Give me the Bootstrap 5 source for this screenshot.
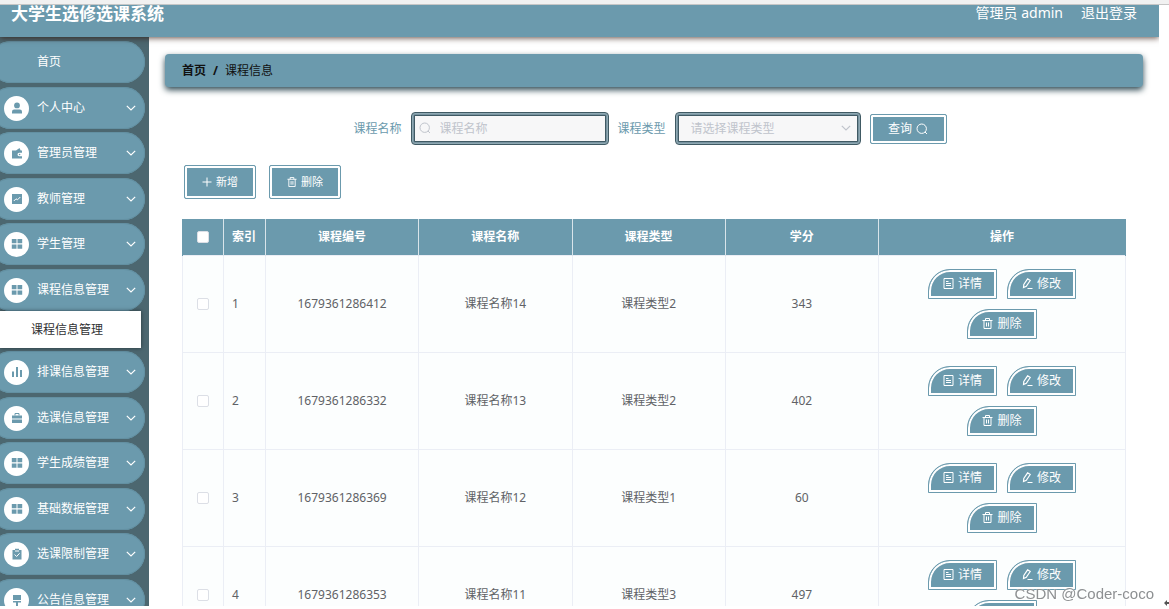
<!DOCTYPE html>
<html lang="zh-CN">
<head>
<meta charset="utf-8">
<meta name="viewport" content="width=device-width, initial-scale=1">
<title>大学生选修选课系统</title>
<link href="https://cdn.jsdelivr.net/npm/bootstrap@5.3.0/dist/css/bootstrap.min.css" rel="stylesheet">
<style>
  :root { --teal: #6b9aad; --deep: #4c6770; --line: #ebeef5; }
  body { font: 12px/18px "Noto Sans", "Noto Sans CJK SC", sans-serif; color: #606266; background: #fff; }
  a { text-decoration: none; color: inherit; }
  svg { display: block; flex: none; }
  .shell { padding-bottom: 3px; }
  .top-strip { height: 5px; background: #f1f1f1; border-bottom: 1px solid #c6c6c6; flex: none; }
  .frame { margin-right: 10px; min-height: 0; }
  .topbar { background: var(--teal); color: #fff; height: 32px; padding: 0 22px 0 11px; line-height: 16px; font-size: 14px; box-shadow: 0 1px 6px rgba(50, 20, 10, .75); clip-path: inset(0 0 -10px 0); z-index: 2; flex: none; }
  .topbar h1 { font-size: 17px; font-weight: 700; line-height: 18px; }
  .topbar .user { gap: 18px; }

  .side { width: 149px; background: var(--deep); padding-top: 4px; flex: none; overflow: hidden; }
  .side li { padding-bottom: 4px; }
  .side li:nth-child(even) { padding-bottom: 3px; }
  .side .entry { height: 42px; margin: 0 4px 0 -10px; padding: 0 9px 0 14px; border-radius: 21px; background: var(--teal); color: #fff; box-shadow: inset 0 0 0 1px #6390a2; }
  .disc { width: 25px; height: 25px; border-radius: 50%; background: #fff; color: var(--teal); margin-right: 8px; flex: none; }
  .disc.blank { background: none; }
  .sub { height: 37px; margin-right: 8px; padding-left: 31px; background: #fff; color: #303133; box-shadow: 0 0 4px rgba(0, 0, 0, .5); position: relative; }

  .page { padding: 17px 16px 0; min-width: 0; overflow: hidden; }
  .crumbs { height: 33px; padding: 0 17px; border-radius: 4px; background: var(--teal); color: #111; box-shadow: 0 3px 6px #2f4a54; gap: 7px; }
  .body-area { padding: 25px 17px 0; }
  .search { gap: 9px; color: var(--teal); padding-right: 8px; }
  .framed { height: 33px; border: 1px solid #405a64; border-radius: 4px; background: #f7f7f8; color: #606266; font-size: 12px; box-shadow: inset 0 0 0 1px #8fa9b3, inset 0 0 0 2px #7893a0, inset 0 0 0 3px #405a64; outline: 0; appearance: none; }
  .framed::placeholder { color: #c0c4cc; opacity: 1; }
  select.framed { width: 186px; padding: 0 30px 0 15px; color: #c0c4cc; }
  input.framed { width: 198px; padding: 0 8px 0 28px; }
  .lead-icon { position: absolute; left: 8px; top: 10px; color: #c0c4cc; }
  .tail-icon { position: absolute; right: 10px; top: 13px; color: #c0c4cc; }

  .tbtn { display: inline-flex; align-items: center; justify-content: center; gap: 4px; height: 30px; padding: 0 14px; border: 1px solid var(--teal); background: var(--teal); color: #fff; box-shadow: inset 0 0 0 2px #fff; font-size: 12px; line-height: 16px; border-radius: 2px; }
  .tbtn.leaf { border-radius: 22px 0 0 0; }
  .tbtn.tool { width: 72px; height: 34px; font-size: 11px; padding: 0; }
  .tbtn.query { width: 77px; padding: 0; }
  .tools { gap: 13px; margin: 20px 0; padding-left: 2px; }

  .grid { table-layout: fixed; width: 100%; border-collapse: collapse; text-align: center; }
  .grid th { height: 36px; padding: 0; background: var(--teal); color: #fff; font-weight: 700; border: 1px solid #d9e4ea; border-width: 0 1px; }
  .grid thead th:first-child { border-left-color: var(--teal); }
  .grid thead th:last-child { border-right-color: var(--teal); }
  .grid td { padding: 0; background: #fcfefe; border: 1px solid var(--line); }
  .grid .pick { width: 41px; }
  .grid .num { width: 42px; text-align: left; padding-left: 8px; }
  .grid .ops { width: 247px; }
  .acts { gap: 10px; padding: 13px 30px; }
  .tick { appearance: none; width: 12px; height: 12px; border: 1px solid #dcdfe6; border-radius: 2px; background: #fff; display: block; margin: 0 auto; }
  .tick:checked { background: var(--teal); }
  .watermark { position: fixed; right: 15px; bottom: 5px; z-index: 5; font: 15px/20px "Liberation Sans", sans-serif; color: #8d9092; text-shadow: 0 0 1px #fff, 1px 1px 0 #fff; }
  .corner { position: fixed; right: 0; bottom: 3px; color: #555; }
</style>
</head>
<body>
<svg width="0" height="0" class="position-absolute" aria-hidden="true">
  <defs>
    <symbol id="down" viewBox="0 0 10 6"><path d="M.8.8L5 5 9.200.8" fill="none" stroke="currentColor" stroke-width="1.200"/></symbol>
    <symbol id="user" viewBox="0 0 12 12"><circle cx="6" cy="3.4" r="2.9" fill="currentColor"/><path d="M1 11.5V9.6Q1 7.4 3.2 7.4h5.6Q11 7.4 11 9.6v1.9z" fill="currentColor"/></symbol>
    <symbol id="wallet" viewBox="0 0 12 12"><path d="M1 3.5h4L8.5 1l1.2 2.5H11v2.3H8.2a1.7 1.7 0 000 3.400H11V11.500H1z" fill="currentColor"/><circle cx="8.600" cy="7.500" r=".8" fill="currentColor"/></symbol>
    <symbol id="trend" viewBox="0 0 12 12"><path d="M1 1h10v10H1z" fill="currentColor"/><path d="M2.800 8l2.200-2.200 1.500 1L9.300 4" fill="none" stroke="#fff"/></symbol>
    <symbol id="tiles" viewBox="0 0 12 12"><path d="M.8 1h4.700v4.200H.8zM6.500 1h4.700v4.200H6.500zM.8 6.500h4.700v4.200H.8zM6.500 6.500h4.700v4.200H6.500z" fill="currentColor"/></symbol>
    <symbol id="bars" viewBox="0 0 12 12"><path d="M1 5.500h2V11H1zM5 1h2v10H5zM9 4h2v7H9z" fill="currentColor"/></symbol>
    <symbol id="case" viewBox="0 0 12 12"><path d="M1 3.500h10V6.500H1zM1 7.500h10V11H1z" fill="currentColor"/><path d="M4 3.500v-2h4v2" fill="none" stroke="currentColor"/></symbol>
    <symbol id="clip" viewBox="0 0 12 12"><path d="M1.500 2H4V.8h4V2h2.500v9.500h-9z" fill="currentColor"/><path d="M3.600 6.500l2 2 3-3.200M4 3h4" fill="none" stroke="#fff"/></symbol>
    <symbol id="brush" viewBox="0 0 12 12"><path d="M2 1h8v5H2zM2 7h8v1.500H7V12H5V8.500H2z" fill="currentColor"/></symbol>
    <symbol id="lens" viewBox="0 0 12 12"><circle cx="5.700" cy="5.700" r="4.700" fill="none" stroke="currentColor"/><path d="M9 9l2 2" stroke="currentColor"/></symbol>
    <symbol id="plus" viewBox="0 0 10 10"><path d="M5 .5v9M.5 5h9" stroke="currentColor"/></symbol>
    <symbol id="bin" viewBox="0 0 11 11"><path d="M.5 2.500h10M3.500 2.500v-2h4v2M2 2.500v8h7v-8M4.500 4.500v4M6.500 4.500v4" fill="none" stroke="currentColor"/></symbol>
    <symbol id="doc" viewBox="0 0 11 11"><path d="M1 .5h9v10H1zM3 3.500h2.500M3 5.500h5M3 7.500h5" fill="none" stroke="currentColor"/></symbol>
    <symbol id="pen" viewBox="0 0 11 11"><path d="M1.500 9.500l.3-3L5.600.8l2.600 1.700L4.300 8.300zM5.500 10.500h5" fill="none" stroke="currentColor" stroke-width="1.200"/></symbol>
  </defs>
</svg>

<div class="shell vh-100 d-flex flex-column overflow-hidden">
  <div class="top-strip"></div>
  <div class="frame flex-grow-1 d-flex flex-column">
    <header class="topbar d-flex justify-content-between align-items-start position-relative">
      <h1 class="m-0">大学生选修选课系统</h1>
      <div class="user d-flex"><span>管理员 admin</span><a href="#">退出登录</a></div>
    </header>
    <div class="d-flex flex-grow-1 overflow-hidden">
      <nav class="side" aria-label="主菜单">
        <ul class="list-unstyled m-0">
          <li><a href="#" class="entry d-flex align-items-center"><span class="disc blank"></span>首页</a></li>
          <li><a href="#" class="entry d-flex align-items-center"><span class="disc d-flex align-items-center justify-content-center"><svg width="12" height="12"><use href="#user"/></svg></span>个人中心<svg class="ms-auto" width="10" height="6"><use href="#down"/></svg></a></li>
          <li><a href="#" class="entry d-flex align-items-center"><span class="disc d-flex align-items-center justify-content-center"><svg width="12" height="12"><use href="#wallet"/></svg></span>管理员管理<svg class="ms-auto" width="10" height="6"><use href="#down"/></svg></a></li>
          <li><a href="#" class="entry d-flex align-items-center"><span class="disc d-flex align-items-center justify-content-center"><svg width="12" height="12"><use href="#trend"/></svg></span>教师管理<svg class="ms-auto" width="10" height="6"><use href="#down"/></svg></a></li>
          <li><a href="#" class="entry d-flex align-items-center"><span class="disc d-flex align-items-center justify-content-center"><svg width="12" height="12"><use href="#tiles"/></svg></span>学生管理<svg class="ms-auto" width="10" height="6"><use href="#down"/></svg></a></li>
          <li><a href="#" class="entry d-flex align-items-center"><span class="disc d-flex align-items-center justify-content-center"><svg width="12" height="12"><use href="#tiles"/></svg></span>课程信息管理<svg class="ms-auto" width="10" height="6"><use href="#down"/></svg></a>
            <a href="#" class="sub d-flex align-items-center">课程信息管理</a></li>
          <li><a href="#" class="entry d-flex align-items-center"><span class="disc d-flex align-items-center justify-content-center"><svg width="12" height="12"><use href="#bars"/></svg></span>排课信息管理<svg class="ms-auto" width="10" height="6"><use href="#down"/></svg></a></li>
          <li><a href="#" class="entry d-flex align-items-center"><span class="disc d-flex align-items-center justify-content-center"><svg width="12" height="12"><use href="#case"/></svg></span>选课信息管理<svg class="ms-auto" width="10" height="6"><use href="#down"/></svg></a></li>
          <li><a href="#" class="entry d-flex align-items-center"><span class="disc d-flex align-items-center justify-content-center"><svg width="12" height="12"><use href="#tiles"/></svg></span>学生成绩管理<svg class="ms-auto" width="10" height="6"><use href="#down"/></svg></a></li>
          <li><a href="#" class="entry d-flex align-items-center"><span class="disc d-flex align-items-center justify-content-center"><svg width="12" height="12"><use href="#tiles"/></svg></span>基础数据管理<svg class="ms-auto" width="10" height="6"><use href="#down"/></svg></a></li>
          <li><a href="#" class="entry d-flex align-items-center"><span class="disc d-flex align-items-center justify-content-center"><svg width="12" height="12"><use href="#clip"/></svg></span>选课限制管理<svg class="ms-auto" width="10" height="6"><use href="#down"/></svg></a></li>
          <li><a href="#" class="entry d-flex align-items-center"><span class="disc d-flex align-items-center justify-content-center"><svg width="12" height="12"><use href="#brush"/></svg></span>公告信息管理<svg class="ms-auto" width="10" height="6"><use href="#down"/></svg></a></li>
        </ul>
      </nav>

      <main class="page flex-grow-1">
        <nav class="crumbs d-flex align-items-center" aria-label="breadcrumb">
          <a href="#" class="fw-bold">首页</a><span class="fw-bold">/</span><span>课程信息</span>
        </nav>
        <div class="body-area">
          <form class="search d-flex justify-content-center align-items-center">
            <label for="courseName">课程名称</label>
            <div class="position-relative"><input id="courseName" class="framed d-block" type="text" placeholder="课程名称"><svg class="lead-icon" width="12" height="12"><use href="#lens"/></svg></div>
            <label for="courseType">课程类型</label>
            <div class="position-relative"><select id="courseType" class="framed d-block"><option>请选择课程类型</option><option>课程类型1</option><option>课程类型2</option><option>课程类型3</option></select><svg class="tail-icon" width="10" height="6"><use href="#down"/></svg></div>
            <button type="button" class="tbtn query">查询<svg width="12" height="12"><use href="#lens"/></svg></button>
          </form>
          <div class="tools d-flex">
            <button type="button" class="tbtn tool"><svg width="10" height="10"><use href="#plus"/></svg>新增</button>
            <button type="button" class="tbtn tool"><svg width="10" height="10"><use href="#bin"/></svg>删除</button>
          </div>
          <table class="grid">
            <thead>
              <tr><th class="pick"><input type="checkbox" class="tick" aria-label="全选"></th><th class="num">索引</th><th>课程编号</th><th>课程名称</th><th>课程类型</th><th>学分</th><th class="ops">操作</th></tr>
            </thead>
            <tbody>
              <tr><td><input type="checkbox" class="tick" aria-label="选择 1"></td><td class="num">1</td><td>1679361286412</td><td>课程名称14</td><td>课程类型2</td><td>343</td>
                <td><div class="acts d-flex flex-wrap justify-content-center"><button type="button" class="tbtn leaf"><svg width="11" height="11"><use href="#doc"/></svg>详情</button><button type="button" class="tbtn leaf"><svg width="11" height="11"><use href="#pen"/></svg>修改</button><button type="button" class="tbtn leaf"><svg width="11" height="11"><use href="#bin"/></svg>删除</button></div></td></tr>
              <tr><td><input type="checkbox" class="tick" aria-label="选择 2"></td><td class="num">2</td><td>1679361286332</td><td>课程名称13</td><td>课程类型2</td><td>402</td>
                <td><div class="acts d-flex flex-wrap justify-content-center"><button type="button" class="tbtn leaf"><svg width="11" height="11"><use href="#doc"/></svg>详情</button><button type="button" class="tbtn leaf"><svg width="11" height="11"><use href="#pen"/></svg>修改</button><button type="button" class="tbtn leaf"><svg width="11" height="11"><use href="#bin"/></svg>删除</button></div></td></tr>
              <tr><td><input type="checkbox" class="tick" aria-label="选择 3"></td><td class="num">3</td><td>1679361286369</td><td>课程名称12</td><td>课程类型1</td><td>60</td>
                <td><div class="acts d-flex flex-wrap justify-content-center"><button type="button" class="tbtn leaf"><svg width="11" height="11"><use href="#doc"/></svg>详情</button><button type="button" class="tbtn leaf"><svg width="11" height="11"><use href="#pen"/></svg>修改</button><button type="button" class="tbtn leaf"><svg width="11" height="11"><use href="#bin"/></svg>删除</button></div></td></tr>
              <tr><td><input type="checkbox" class="tick" aria-label="选择 4"></td><td class="num">4</td><td>1679361286353</td><td>课程名称11</td><td>课程类型3</td><td>497</td>
                <td><div class="acts d-flex flex-wrap justify-content-center"><button type="button" class="tbtn leaf"><svg width="11" height="11"><use href="#doc"/></svg>详情</button><button type="button" class="tbtn leaf"><svg width="11" height="11"><use href="#pen"/></svg>修改</button><button type="button" class="tbtn leaf"><svg width="11" height="11"><use href="#bin"/></svg>删除</button></div></td></tr>
            </tbody>
          </table>
        </div>
      </main>
    </div>
  </div>
</div>
<div class="watermark">CSDN @Coder-coco</div>
<svg class="corner" width="5" height="6" viewBox="0 0 5 6" aria-hidden="true"><path d="M0 3l3-3v2h2v2H3v2z" fill="currentColor"/></svg>
<script src="https://cdn.jsdelivr.net/npm/bootstrap@5.3.0/dist/js/bootstrap.bundle.min.js"></script>
</body>
</html>
